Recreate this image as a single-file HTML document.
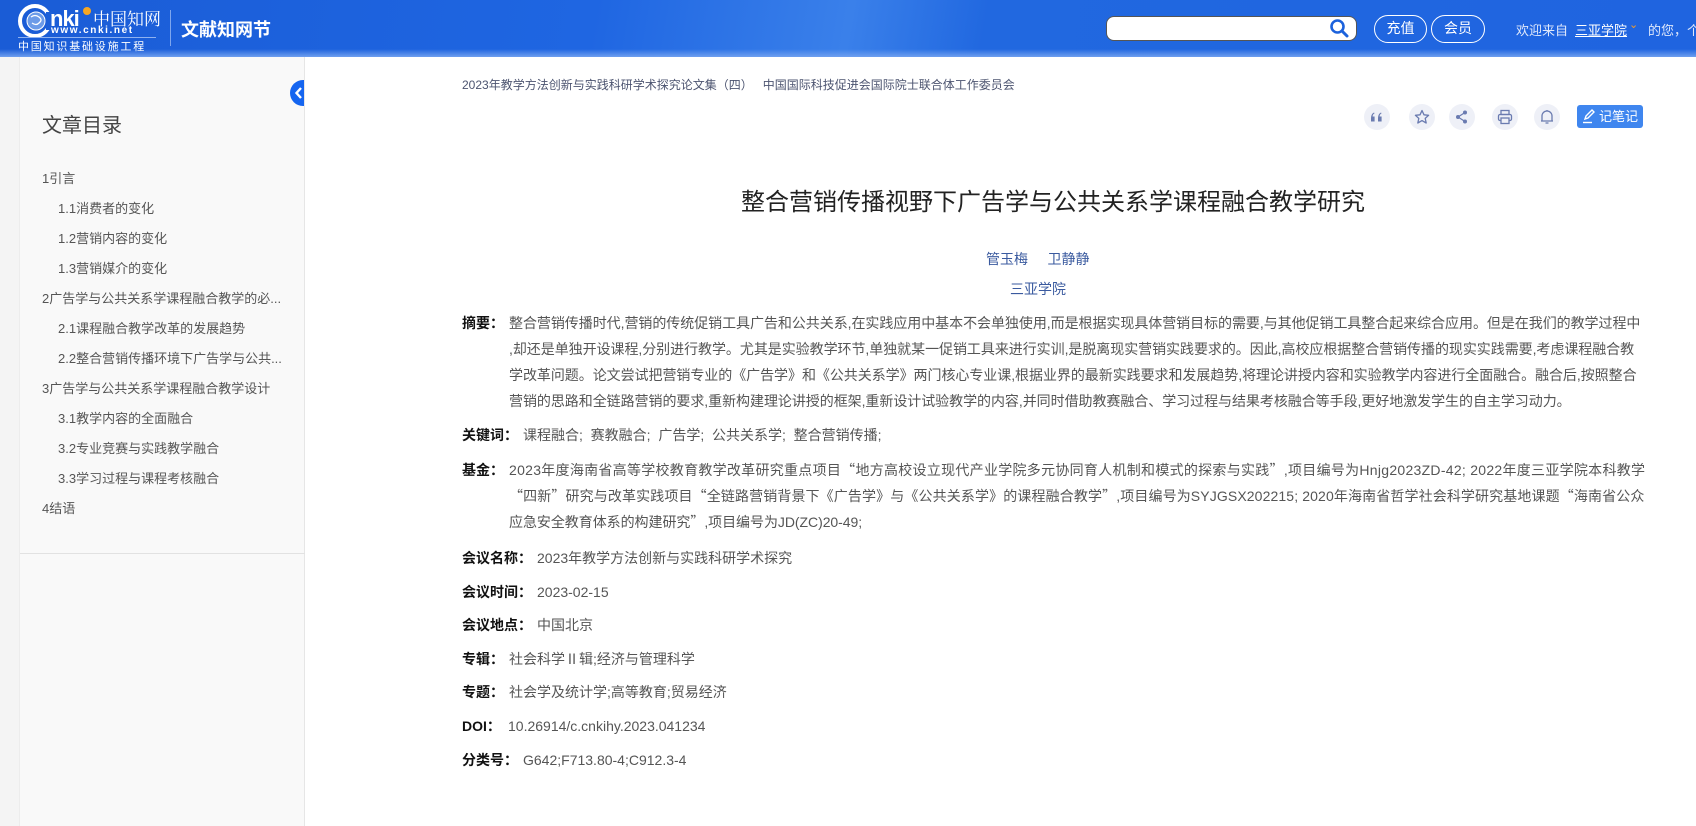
<!DOCTYPE html>
<html><head><meta charset="utf-8">
<style>
*{margin:0;padding:0;box-sizing:border-box}
body{width:1696px;height:826px;overflow:hidden;background:#fff;font-family:"Liberation Sans","Noto Sans CJK SC",sans-serif;position:relative;color:#333}
.abs{position:absolute;white-space:nowrap}
#hdr{position:absolute;left:0;top:0;width:1696px;height:57px;background:linear-gradient(100deg,#1a5cd6 0%,#1f66e2 35%,#3a80ea 50%,#2168e0 58%,#1f64e0 100%);overflow:hidden}
#hdr:after{content:"";position:absolute;left:0;right:0;bottom:0;height:8px;background:linear-gradient(#1f64e000,#6f9fef)}
.hb{position:absolute;top:15px;height:28px;border:1.5px solid #fff;border-radius:14px;color:#fff;font-size:14px;line-height:25px;text-align:center}
#side{position:absolute;left:19px;top:57px;width:286px;height:769px;background:#f9f9f9;border-left:1px solid #ececec;border-right:1px solid #e6e6e6}
.toc{position:absolute;font-size:13px;color:#555;white-space:nowrap}
.lab{position:absolute;left:462px;font-size:14px;font-weight:bold;color:#111;white-space:nowrap;line-height:20px}
.val{position:absolute;font-size:14px;color:#555;white-space:nowrap;line-height:20px}
.ab{position:absolute;left:509px;font-size:14px;color:#555;white-space:nowrap;letter-spacing:-0.05px;line-height:20px}
.q{font-family:"Noto Sans CJK SC",sans-serif}
.ic{position:absolute;top:104px;width:26px;height:26px;border-radius:50%;background:#eef0f7}
.ic svg{position:absolute;left:5px;top:5px}
</style></head><body>
<div id="hdr">
  <svg class="abs" style="left:18px;top:4px" width="34" height="34" viewBox="0 0 34 34"><circle cx="17" cy="17" r="15" fill="none" stroke="#fff" stroke-width="4"/><circle cx="18" cy="17" r="9" fill="#6c9be8" stroke="#fff" stroke-width="1"/><path d="M13 13q4-3 8 0t0 6q-3 3-7 0" fill="none" stroke="#fff" stroke-width="1.3"/><rect x="28" y="8" width="8" height="18" fill="#1c5fd8"/></svg>
  <div class="abs" style="left:50px;top:6px;color:#fff;font-size:22px;font-weight:bold;letter-spacing:-1px">nki</div>
  <div class="abs" style="left:83px;top:7px;width:8px;height:8px;border-radius:50%;background:#f5a623"></div>
  <div class="abs" style="left:93px;top:5px;color:#fff;font-size:17px;font-family:'Noto Serif CJK SC',serif">中国知网</div>
  <div class="abs" style="left:51px;top:25px;color:#fff;font-size:10px;font-weight:bold;letter-spacing:1.6px">www.cnki.net</div>
  <div class="abs" style="left:18px;top:37px;width:138px;border-top:1px solid #8fb2f0"></div>
  <div class="abs" style="left:18px;top:38px;color:#fff;font-size:11px;letter-spacing:1.8px">中国知识基础设施工程</div>
  <div class="abs" style="left:170px;top:10px;width:1px;height:36px;background:#7ea6ee"></div>
  <div class="abs" style="left:181px;top:16px;color:#fff;font-size:18px;font-weight:bold">文献知网节</div>
  <div class="abs" style="left:1106px;top:16px;width:251px;height:25px;background:#fff;border:1.5px solid #555;border-radius:8px"></div>
  <svg class="abs" style="left:1329px;top:18px" width="20" height="20" viewBox="0 0 20 20"><circle cx="8.5" cy="8.5" r="6" fill="none" stroke="#1c62dc" stroke-width="2.6"/><path d="M13 13l5 5" stroke="#1c62dc" stroke-width="3" stroke-linecap="round"/></svg>
  <div class="hb" style="left:1374px;width:53px">充值</div>
  <div class="hb" style="left:1431px;width:54px">会员</div>
  <div class="abs" style="left:1516px;top:20px;color:#dfe8fb;font-size:13px">欢迎来自</div>
  <div class="abs" style="left:1575px;top:20px;color:#fff;font-size:13px;text-decoration:underline">三亚学院</div>
  <div class="abs" style="left:1629px;top:18px;color:#f39a2b;font-size:11px">⌄</div>
  <div class="abs" style="left:1648px;top:20px;color:#dfe8fb;font-size:13px">的您，个</div>
</div>

<div class="abs" style="left:0;top:57px;width:19px;height:769px;background:#f4f4f4"></div>
<div id="side">
  <div class="abs" style="left:22px;top:52px;font-size:20px;color:#444">文章目录</div>
  <div class="toc" style="left:22px;top:111px">1引言</div>
  <div class="toc" style="left:38px;top:141px">1.1消费者的变化</div>
  <div class="toc" style="left:38px;top:171px">1.2营销内容的变化</div>
  <div class="toc" style="left:38px;top:201px">1.3营销媒介的变化</div>
  <div class="toc" style="left:22px;top:231px">2广告学与公共关系学课程融合教学的必...</div>
  <div class="toc" style="left:38px;top:261px">2.1课程融合教学改革的发展趋势</div>
  <div class="toc" style="left:38px;top:291px">2.2整合营销传播环境下广告学与公共...</div>
  <div class="toc" style="left:22px;top:321px">3广告学与公共关系学课程融合教学设计</div>
  <div class="toc" style="left:38px;top:351px">3.1教学内容的全面融合</div>
  <div class="toc" style="left:38px;top:381px">3.2专业竞赛与实践教学融合</div>
  <div class="toc" style="left:38px;top:411px">3.3学习过程与课程考核融合</div>
  <div class="toc" style="left:22px;top:441px">4结语</div>
  <div class="abs" style="left:0;top:496px;width:285px;height:1px;background:#e2e2e2"></div>
</div>
<div class="abs" style="left:290px;top:80px;width:14px;height:26px;border-radius:13px 0 0 13px;background:#1565f0"></div>
<svg class="abs" style="left:294px;top:87px" width="10" height="12" viewBox="0 0 10 12"><path d="M7 1L2.5 6L7 11" fill="none" stroke="#fff" stroke-width="2.4"/></svg>

<div class="abs" style="left:462px;top:76px;font-size:12px;color:#4c5470">2023年教学方法创新与实践科研学术探究论文集（四）&nbsp;&nbsp;&nbsp;中国国际科技促进会国际院士联合体工作委员会</div>

<div class="ic" style="left:1364px"><svg width="16" height="16" viewBox="0 0 16 16"><path d="M2 12.5v-3.5q0-4 3-5.5l.6.8q-2 1.2-2 3.2h2v5zM9 12.5v-3.5q0-4 3-5.5l.6.8q-2 1.2-2 3.2h2v5z" fill="#6a7bb0"/></svg></div>
<div class="ic" style="left:1409px"><svg width="16" height="16" viewBox="0 0 16 16"><path d="M8 1.5l2 4.3 4.6.5-3.4 3.1 1 4.6L8 11.6 3.8 14l1-4.6L1.4 6.3 6 5.8z" fill="none" stroke="#6a7bb0" stroke-width="1.3" stroke-linejoin="round"/></svg></div>
<div class="ic" style="left:1449px"><svg width="16" height="16" viewBox="0 0 16 16"><circle cx="11" cy="3.5" r="2" fill="#6a7bb0"/><circle cx="4" cy="8" r="2" fill="#6a7bb0"/><circle cx="11" cy="12.5" r="2" fill="#6a7bb0"/><path d="M11 3.5L4 8l7 4.5" stroke="#6a7bb0" stroke-width="1.2" fill="none"/></svg></div>
<div class="ic" style="left:1492px"><svg width="16" height="16" viewBox="0 0 16 16"><rect x="4" y="1.5" width="8" height="4" fill="none" stroke="#6a7bb0" stroke-width="1.3"/><rect x="1.5" y="5.5" width="13" height="6" rx="1.5" fill="none" stroke="#6a7bb0" stroke-width="1.3"/><rect x="4" y="9" width="8" height="5.5" fill="#eef0f7" stroke="#6a7bb0" stroke-width="1.3"/></svg></div>
<div class="ic" style="left:1534px"><svg width="16" height="16" viewBox="0 0 16 16"><path d="M3 12V7a5 5 0 0110 0v5zM2 12h12M6.5 14h3M8 1v1" fill="none" stroke="#6a7bb0" stroke-width="1.3"/></svg></div>
<div class="abs" style="left:1577px;top:105px;width:66px;height:23px;background:#3f86ef;border-radius:3px;color:#fff;font-size:13px;line-height:23px;padding-left:22px">记笔记</div>
<svg class="abs" style="left:1581px;top:108px" width="16" height="16" viewBox="0 0 16 16"><path d="M4 11l1-3 6-6 2 2-6 6z" fill="none" stroke="#fff" stroke-width="1.4"/><path d="M2 14.5h9" stroke="#fff" stroke-width="1.4"/></svg>

<div class="abs" style="left:741px;top:182px;font-size:24px;color:#222">整合营销传播视野下广告学与公共关系学课程融合教学研究</div>
<div class="abs" style="left:986px;top:249px;font-size:14px;color:#3a5a9f">管玉梅&nbsp;&nbsp;&nbsp;&nbsp;&nbsp;卫静静</div>
<div class="abs" style="left:1010px;top:279px;font-size:14px;color:#3a5a9f">三亚学院</div>

<div class="lab" style="top:313px">摘要：</div>
<div class="ab" style="top:313px">整合营销传播时代,营销的传统促销工具广告和公共关系,在实践应用中基本不会单独使用,而是根据实现具体营销目标的需要,与其他促销工具整合起来综合应用。但是在我们的教学过程中</div>
<div class="ab" style="top:339px">,却还是单独开设课程,分别进行教学。尤其是实验教学环节,单独就某一促销工具来进行实训,是脱离现实营销实践要求的。因此,高校应根据整合营销传播的现实实践需要,考虑课程融合教</div>
<div class="ab" style="top:365px">学改革问题。论文尝试把营销专业的《广告学》和《公共关系学》两门核心专业课,根据业界的最新实践要求和发展趋势,将理论讲授内容和实验教学内容进行全面融合。融合后,按照整合</div>
<div class="ab" style="top:391px">营销的思路和全链路营销的要求,重新构建理论讲授的框架,重新设计试验教学的内容,并同时借助教赛融合、学习过程与结果考核融合等手段,更好地激发学生的自主学习动力。</div>

<div class="lab" style="top:425px">关键词：</div>
<div class="val" style="left:523px;top:425px">课程融合;&nbsp;&nbsp;赛教融合;&nbsp;&nbsp;广告学;&nbsp;&nbsp;公共关系学;&nbsp;&nbsp;整合营销传播;</div>

<div class="lab" style="top:460px">基金：</div>
<div class="ab" style="top:460px;letter-spacing:0.28px">2023年度海南省高等学校教育教学改革研究重点项目<span class="q">“</span>地方高校设立现代产业学院多元协同育人机制和模式的探索与实践<span class="q">”</span>,项目编号为Hnjg2023ZD-42; 2022年度三亚学院本科教学</div>
<div class="ab" style="top:486px;letter-spacing:0.12px"><span class="q">“</span>四新<span class="q">”</span>研究与改革实践项目<span class="q">“</span>全链路营销背景下《广告学》与《公共关系学》的课程融合教学<span class="q">”</span>,项目编号为SYJGSX202215; 2020年海南省哲学社会科学研究基地课题<span class="q">“</span>海南省公众</div>
<div class="ab" style="top:512px">应急安全教育体系的构建研究<span class="q">”</span>,项目编号为JD(ZC)20-49;</div>

<div class="lab" style="top:548px">会议名称：</div><div class="val" style="left:537px;top:548px">2023年教学方法创新与实践科研学术探究</div>
<div class="lab" style="top:582px">会议时间：</div><div class="val" style="left:537px;top:582px">2023-02-15</div>
<div class="lab" style="top:615px">会议地点：</div><div class="val" style="left:537px;top:615px">中国北京</div>
<div class="lab" style="top:649px">专辑：</div><div class="val" style="left:509px;top:649px">社会科学Ⅱ辑;经济与管理科学</div>
<div class="lab" style="top:682px">专题：</div><div class="val" style="left:509px;top:682px">社会学及统计学;高等教育;贸易经济</div>
<div class="lab" style="top:716px">DOI：</div><div class="val" style="left:508px;top:716px">10.26914/c.cnkihy.2023.041234</div>
<div class="lab" style="top:750px">分类号：</div><div class="val" style="left:523px;top:750px">G642;F713.80-4;C912.3-4</div>
</body></html>
